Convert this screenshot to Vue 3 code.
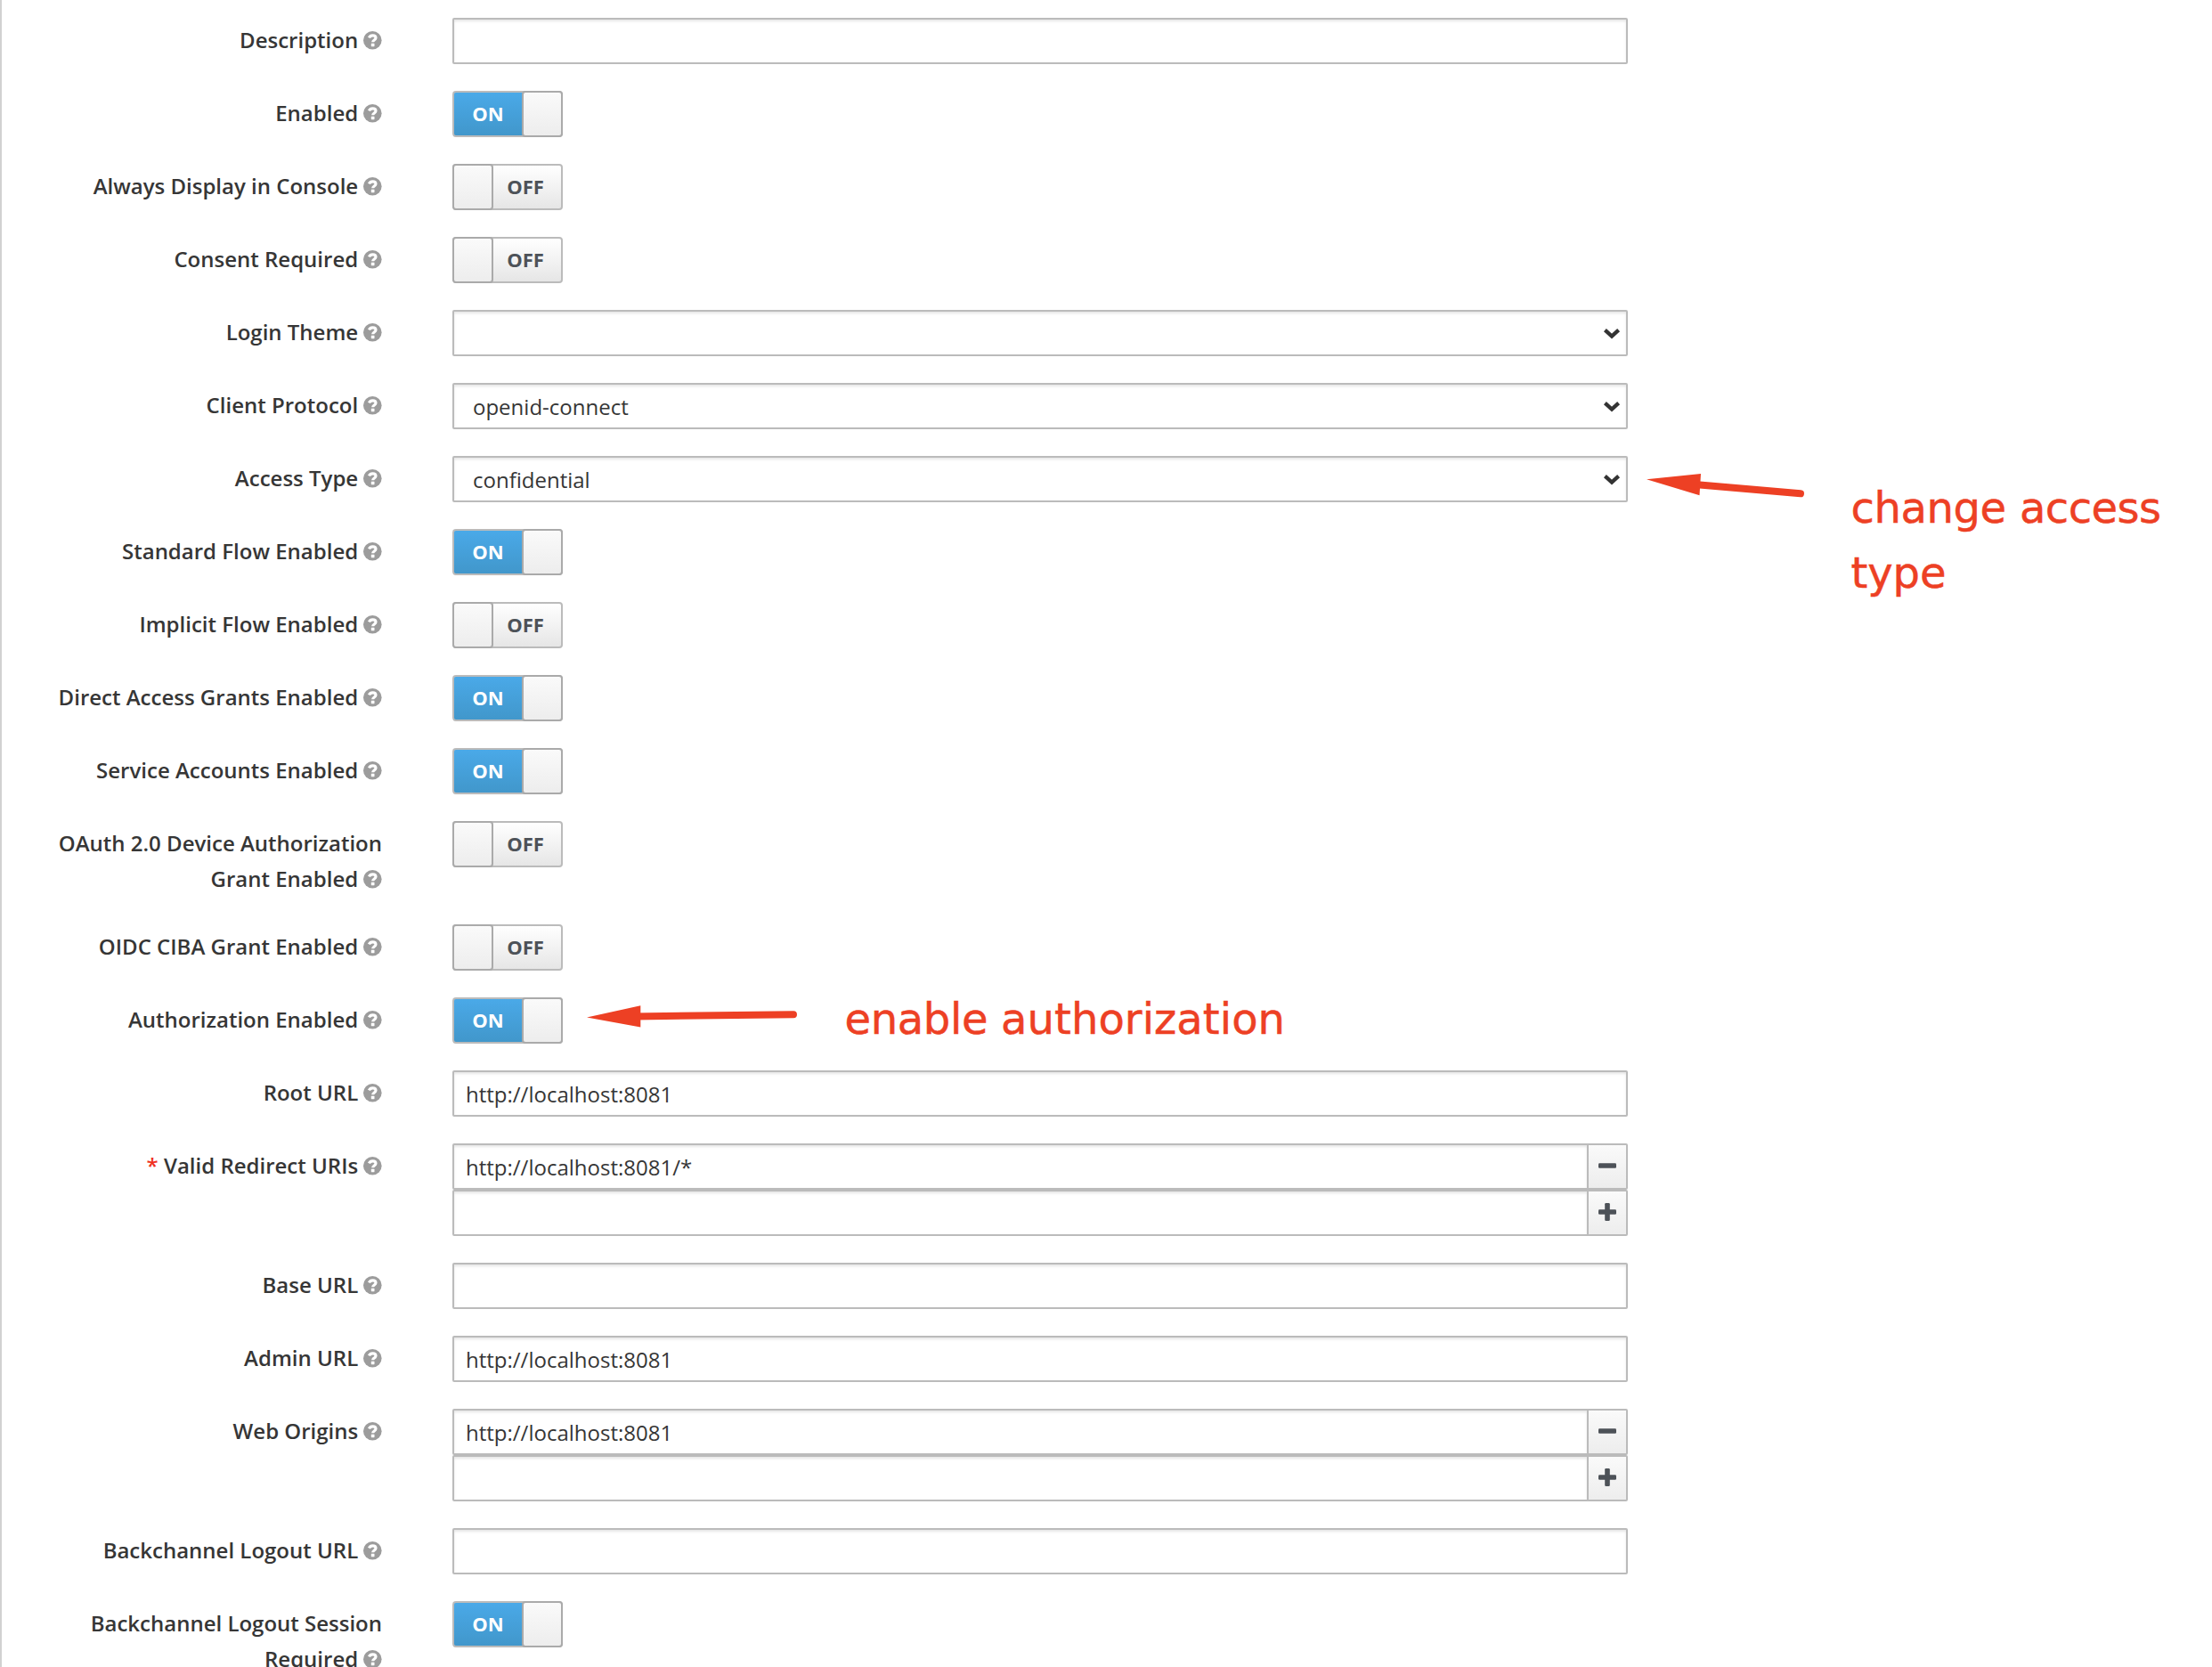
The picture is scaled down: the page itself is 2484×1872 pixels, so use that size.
<script setup>
const fields = [
  { label: 'Description', type: 'text', value: '' },
  { label: 'Enabled', type: 'switch', on: true },
  { label: 'Always Display in Console', type: 'switch', on: false },
  { label: 'Consent Required', type: 'switch', on: false },
  { label: 'Login Theme', type: 'select', value: '' },
  { label: 'Client Protocol', type: 'select', value: 'openid-connect' },
  { label: 'Access Type', type: 'select', value: 'confidential' },
  { label: 'Standard Flow Enabled', type: 'switch', on: true },
  { label: 'Implicit Flow Enabled', type: 'switch', on: false },
  { label: 'Direct Access Grants Enabled', type: 'switch', on: true },
  { label: 'Service Accounts Enabled', type: 'switch', on: true },
  { label: 'OAuth 2.0 Device Authorization Grant Enabled', type: 'switch', on: false },
  { label: 'OIDC CIBA Grant Enabled', type: 'switch', on: false },
  { label: 'Authorization Enabled', type: 'switch', on: true },
  { label: 'Root URL', type: 'text', value: 'http://localhost:8081' },
  { label: 'Valid Redirect URIs', type: 'list', required: true, values: ['http://localhost:8081/*', ''] },
  { label: 'Base URL', type: 'text', value: '' },
  { label: 'Admin URL', type: 'text', value: 'http://localhost:8081' },
  { label: 'Web Origins', type: 'list', values: ['http://localhost:8081', ''] },
  { label: 'Backchannel Logout URL', type: 'text', value: '' },
  { label: 'Backchannel Logout Session Required', type: 'switch', on: true },
]
</script>

<template>
  <main class="page">
    <form class="form">
      <div v-for="f in fields" :key="f.label" class="row">
        <label class="label">
          <span v-if="f.required" class="star">* </span>{{ f.label }}&nbsp;<svg class="help" viewBox="0 0 20.600 20.600">
            <circle cx="10.300" cy="10.300" r="10.300" />
            <path d="M6.400 7.400C7.300 5.600 8.700 4.800 10.500 4.800c2 0 3.500 1.100 3.500 2.800 0 2.500-3.300 2.400-3.300 4.700" />
            <rect x="8.800" y="13.700" width="3.700" height="3.500" rx="0.400" />
          </svg>
        </label>

        <div v-if="f.type === 'text'" class="input">{{ f.value }}</div>

        <div v-else-if="f.type === 'select'" class="input select">
          <span>{{ f.value }}</span>
          <svg class="chevron" viewBox="0 0 20 14"><path d="M2.400 2.600 10 9.500 17.600 2.600" /></svg>
        </div>

        <div v-else-if="f.type === 'switch'" class="switch" :class="{ on: f.on }">
          <span class="state">{{ f.on ? 'ON' : 'OFF' }}</span>
          <span class="handle"></span>
        </div>

        <div v-else class="list">
          <div v-for="(v, i) in f.values" :key="i" class="group">
            <div class="input">{{ v }}</div>
            <button type="button" class="btn">
              <svg viewBox="0 0 20 20">
                <rect x="0" y="7.200" width="20" height="5.600" rx="1.300" />
                <rect v-if="i === f.values.length - 1" x="7.200" y="0" width="5.600" height="20" rx="1.300" />
              </svg>
            </button>
          </div>
        </div>
      </div>
    </form>

    <svg class="notes" viewBox="0 0 2484 1872">
      <path class="shaft" d="M1900 543.800 2022 554.300" />
      <path class="head" d="M1849 538.300 1910 532 1908.500 556.300z" />
      <path class="shaft" d="M712 1141.500 891 1139.200" />
      <path class="head" d="M659 1142.400 719.300 1129.200V1153.500z" />
      <text x="2078.500" y="587" textLength="174.500">change</text>
      <text x="2268" y="587" textLength="159">access</text>
      <text x="2078.500" y="659.500" textLength="107">type</text>
      <text x="948.500" y="1160.500" textLength="161">enable</text>
      <text x="1124" y="1160.500" textLength="319">authorization</text>
    </svg>
  </main>
</template>

<style>
body {
  margin: 0;
  background: #fff;
}
</style>

<style scoped>
.page {
  position: relative;
  box-sizing: border-box;
  width: 2484px;
  height: 1872px;
  overflow: hidden;
  border-left: 2px solid #d1d1d1;
  background: #fff;
  color: #363636;
  font: 24px/40px "Open Sans", "Noto Sans", sans-serif;
}
.form {
  display: flex;
  flex-direction: column;
  gap: 30px;
  padding: 20px 0 0 46px;
}
.row {
  display: flex;
  align-items: flex-start;
  gap: 79px;
  min-height: 52px;
}
.label {
  box-sizing: border-box;
  width: 381px;
  padding: 5px 0 1px;
  text-align: right;
  font-weight: 600;
}
.star {
  color: #f0311f;
}
.help {
  width: 20.600px;
  height: 20.600px;
  vertical-align: -2px;
  fill: #9c9c9c;
}
.help path {
  fill: none;
  stroke: #fff;
  stroke-width: 3.200;
}
.help rect {
  fill: #fff;
}
.input {
  box-sizing: border-box;
  width: 1320px;
  height: 52px;
  padding: 5px 13px 0;
  border: 2px solid #bbb;
  border-radius: 2px;
  background: #fff;
  box-shadow: inset 0 2px 3px rgba(3, 3, 3, 0.1);
}
.select {
  display: flex;
  justify-content: space-between;
  padding: 5px 6px 0 21px;
}
.chevron {
  width: 20px;
  height: 14px;
  margin-top: 13px;
  fill: none;
  stroke: #333;
  stroke-width: 4.300;
}
.switch {
  display: flex;
  flex-direction: row-reverse;
  box-sizing: border-box;
  width: 124px;
  height: 52px;
  border: 2px solid #bbb;
  border-radius: 4px;
  background: linear-gradient(#fff, #e6e6e6);
  color: #4d5258;
}
.switch.on {
  flex-direction: row;
  background: linear-gradient(#4aa9e8, #4197cb);
  color: #fff;
}
.state {
  flex: 1;
  padding-right: 2px;
  text-align: center;
  font-size: 22px;
  font-weight: 700;
  line-height: 47px;
}
.handle {
  box-sizing: border-box;
  width: 46px;
  height: 52px;
  margin: -2px;
  border: 2px solid #aaa;
  border-radius: 4px;
  background: linear-gradient(#fafafa, #ededed);
}
.group {
  display: flex;
  width: 1320px;
}
.group .input {
  width: 1276px;
  border-radius: 2px 0 0 2px;
}
.btn {
  display: flex;
  align-items: center;
  justify-content: center;
  box-sizing: border-box;
  width: 46px;
  height: 52px;
  margin-left: -2px;
  padding: 0 0 2px;
  border: 2px solid #bbb;
  border-radius: 0 2px 2px 0;
  background: linear-gradient(#fafafa, #ededed);
}
.btn svg {
  width: 20px;
  height: 20px;
  fill: #4d5258;
}
.notes {
  position: absolute;
  top: 0;
  left: -2px;
  width: 2484px;
  height: 1872px;
  fill: #ed4024;
  font-family: "DejaVu Sans", sans-serif;
  font-size: 48px;
}
.notes text {
  stroke: #ed4024;
  stroke-width: 0.500;
}
.shaft {
  stroke: #ed4024;
  stroke-width: 8;
  stroke-linecap: round;
}
</style>
